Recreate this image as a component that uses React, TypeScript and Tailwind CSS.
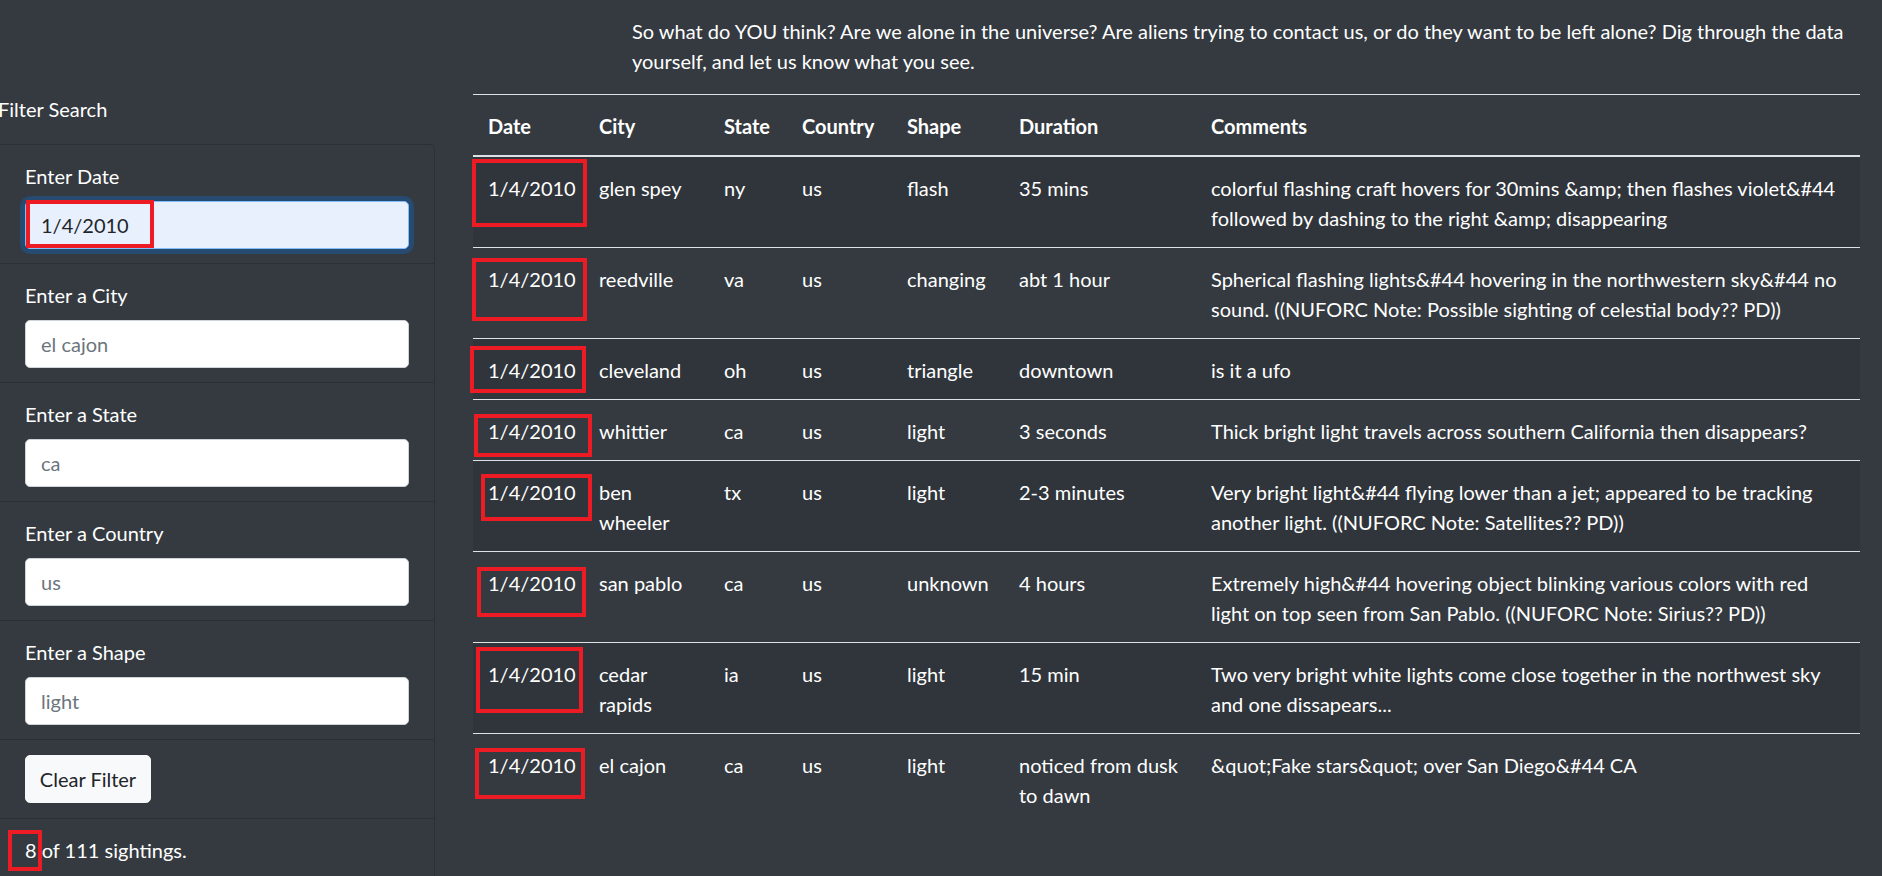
import React from 'react';

type Sighting = {
  date: string;
  city: string;
  state: string;
  country: string;
  shape: string;
  duration: string;
  comments: string;
};

const sightings: Sighting[] = [
  {
    date: '1/4/2010',
    city: 'glen spey',
    state: 'ny',
    country: 'us',
    shape: 'flash',
    duration: '35 mins',
    comments:
      'colorful flashing craft hovers for 30mins &amp; then flashes violet&#44 followed by dashing to the right &amp; disappearing',
  },
  {
    date: '1/4/2010',
    city: 'reedville',
    state: 'va',
    country: 'us',
    shape: 'changing',
    duration: 'abt 1 hour',
    comments:
      'Spherical flashing lights&#44 hovering in the northwestern sky&#44 no sound. ((NUFORC Note: Possible sighting of celestial body?? PD))',
  },
  {
    date: '1/4/2010',
    city: 'cleveland',
    state: 'oh',
    country: 'us',
    shape: 'triangle',
    duration: 'downtown',
    comments: 'is it a ufo',
  },
  {
    date: '1/4/2010',
    city: 'whittier',
    state: 'ca',
    country: 'us',
    shape: 'light',
    duration: '3 seconds',
    comments: 'Thick bright light travels across southern California then disappears?',
  },
  {
    date: '1/4/2010',
    city: 'ben wheeler',
    state: 'tx',
    country: 'us',
    shape: 'light',
    duration: '2-3 minutes',
    comments:
      'Very bright light&#44 flying lower than a jet; appeared to be tracking another light. ((NUFORC Note: Satellites?? PD))',
  },
  {
    date: '1/4/2010',
    city: 'san pablo',
    state: 'ca',
    country: 'us',
    shape: 'unknown',
    duration: '4 hours',
    comments:
      'Extremely high&#44 hovering object blinking various colors with red light on top seen from San Pablo. ((NUFORC Note: Sirius?? PD))',
  },
  {
    date: '1/4/2010',
    city: 'cedar rapids',
    state: 'ia',
    country: 'us',
    shape: 'light',
    duration: '15 min',
    comments:
      'Two very bright white lights come close together in the northwest sky and one dissapears...',
  },
  {
    date: '1/4/2010',
    city: 'el cajon',
    state: 'ca',
    country: 'us',
    shape: 'light',
    duration: 'noticed from dusk to dawn',
    comments: '&quot;Fake stars&quot; over San Diego&#44 CA',
  },
];

// red highlight boxes drawn over the screenshot, relative to the table's top-left
const marks = [
  'left-[-1px] top-[65px] w-[115px] h-[68px]',
  'left-[-1px] top-[164px] w-[115px] h-[63px]',
  'left-[-3px] top-[252px] w-[116px] h-[47px]',
  'left-[1px] top-[320px] w-[118px] h-[43px]',
  'left-[8px] top-[380px] w-[111px] h-[47px]',
  'left-[4px] top-[473px] w-[109px] h-[50px]',
  'left-[3px] top-[553px] w-[107px] h-[66px]',
  'left-[2px] top-[654px] w-[110px] h-[51px]',
];

const filters = [
  { label: 'Enter a City', placeholder: 'el cajon' },
  { label: 'Enter a State', placeholder: 'ca' },
  { label: 'Enter a Country', placeholder: 'us' },
  { label: 'Enter a Shape', placeholder: 'light' },
];

function Sidebar() {
  return (
    <aside className="w-[435px] shrink-0 pt-[94px]">
      <h5 className="ml-[-2px] mb-[20px]">Filter Search</h5>
      <ul className="border border-l-0 border-[#2b3035] rounded-tr-[5px]">
        <li className="relative px-[25px] pt-[16px] pb-[14px] border-b border-[#2b3035]">
          <label className="block mb-[10px]">Enter Date</label>
          <input
            type="text"
            defaultValue="1/4/2010"
            className="block w-full h-[48px] px-[15px] rounded-[5px] bg-[#e8f0fe] text-[#212529] border border-[#80bdff] shadow-[0_0_0_5px_rgba(0,123,255,0.25)] outline-none"
          />
          <span className="absolute left-[26px] top-[55px] w-[128px] h-[48px] border-4 border-[#ed1c24]" />
        </li>
        {filters.map((f) => (
          <li key={f.label} className="px-[25px] pt-[16px] pb-[14px] border-b border-[#2b3035]">
            <label className="block mb-[10px]">{f.label}</label>
            <input
              type="text"
              placeholder={f.placeholder}
              className="block w-full h-[48px] px-[15px] rounded-[5px] bg-white text-[#495057] placeholder:text-[#6c757d] border border-[#ced4da] outline-none"
            />
          </li>
        ))}
        <li className="px-[25px] py-[15px] border-b border-[#2b3035]">
          <button className="h-[48px] w-[126px] rounded-[5px] bg-[#f8f9fa] text-[#212529] border border-[#f8f9fa]">
            Clear Filter
          </button>
        </li>
        <li className="relative px-[25px] pt-[16px] pb-[14px]">
          8 of 111 sightings.
          <span className="absolute left-[8px] top-[11px] w-[34px] h-[41px] border-4 border-[#ed1c24]" />
        </li>
      </ul>
    </aside>
  );
}

function SightingsTable() {
  return (
    <div className="relative ml-[38px] w-[1387px]">
      <table className="w-full table-fixed text-left">
        <colgroup>
          <col className="w-[111px]" />
          <col className="w-[125px]" />
          <col className="w-[78px]" />
          <col className="w-[105px]" />
          <col className="w-[112px]" />
          <col className="w-[192px]" />
          <col />
        </colgroup>
        <thead>
          <tr className="border-t border-b-2 border-[#dee2e6]">
            {['Date', 'City', 'State', 'Country', 'Shape', 'Duration', 'Comments'].map((h) => (
              <th key={h} className="px-[15px] pt-[16px] pb-[14px] font-bold align-bottom">
                {h}
              </th>
            ))}
          </tr>
        </thead>
        <tbody>
          {sightings.map((s, i) => (
            <tr
              key={i}
              className={`border-t border-[#dee2e6] ${i % 2 === 0 ? 'bg-[#30353b]' : ''}`}
            >
              <td className="px-[15px] pt-[16px] pb-[14px] align-top">{s.date}</td>
              <td className="px-[15px] pt-[16px] pb-[14px] align-top">{s.city}</td>
              <td className="px-[15px] pt-[16px] pb-[14px] align-top">{s.state}</td>
              <td className="px-[15px] pt-[16px] pb-[14px] align-top">{s.country}</td>
              <td className="px-[15px] pt-[16px] pb-[14px] align-top">{s.shape}</td>
              <td className="px-[15px] pt-[16px] pb-[14px] align-top">{s.duration}</td>
              <td className="px-[15px] pt-[16px] pb-[14px] align-top">{s.comments}</td>
            </tr>
          ))}
        </tbody>
      </table>
      {marks.map((m, i) => (
        <span key={i} className={`absolute border-4 border-[#ed1c24] ${m}`} />
      ))}
    </div>
  );
}

export default function App() {
  return (
    <div
      className="min-h-screen bg-[#343a40] text-white text-[20px] leading-[30px] flex overflow-hidden"
      style={{ fontFamily: '"Segoe UI", Lato, sans-serif' }}
    >
      <Sidebar />
      <main className="flex-1 pt-[16px]">
        <p className="ml-[197px] w-[1228px] mb-[18px]">
          So what do YOU think? Are we alone in the universe? Are aliens trying to contact us, or
          do they want to be left alone? Dig through the data yourself, and let us know what you
          see.
        </p>
        <SightingsTable />
      </main>
    </div>
  );
}
